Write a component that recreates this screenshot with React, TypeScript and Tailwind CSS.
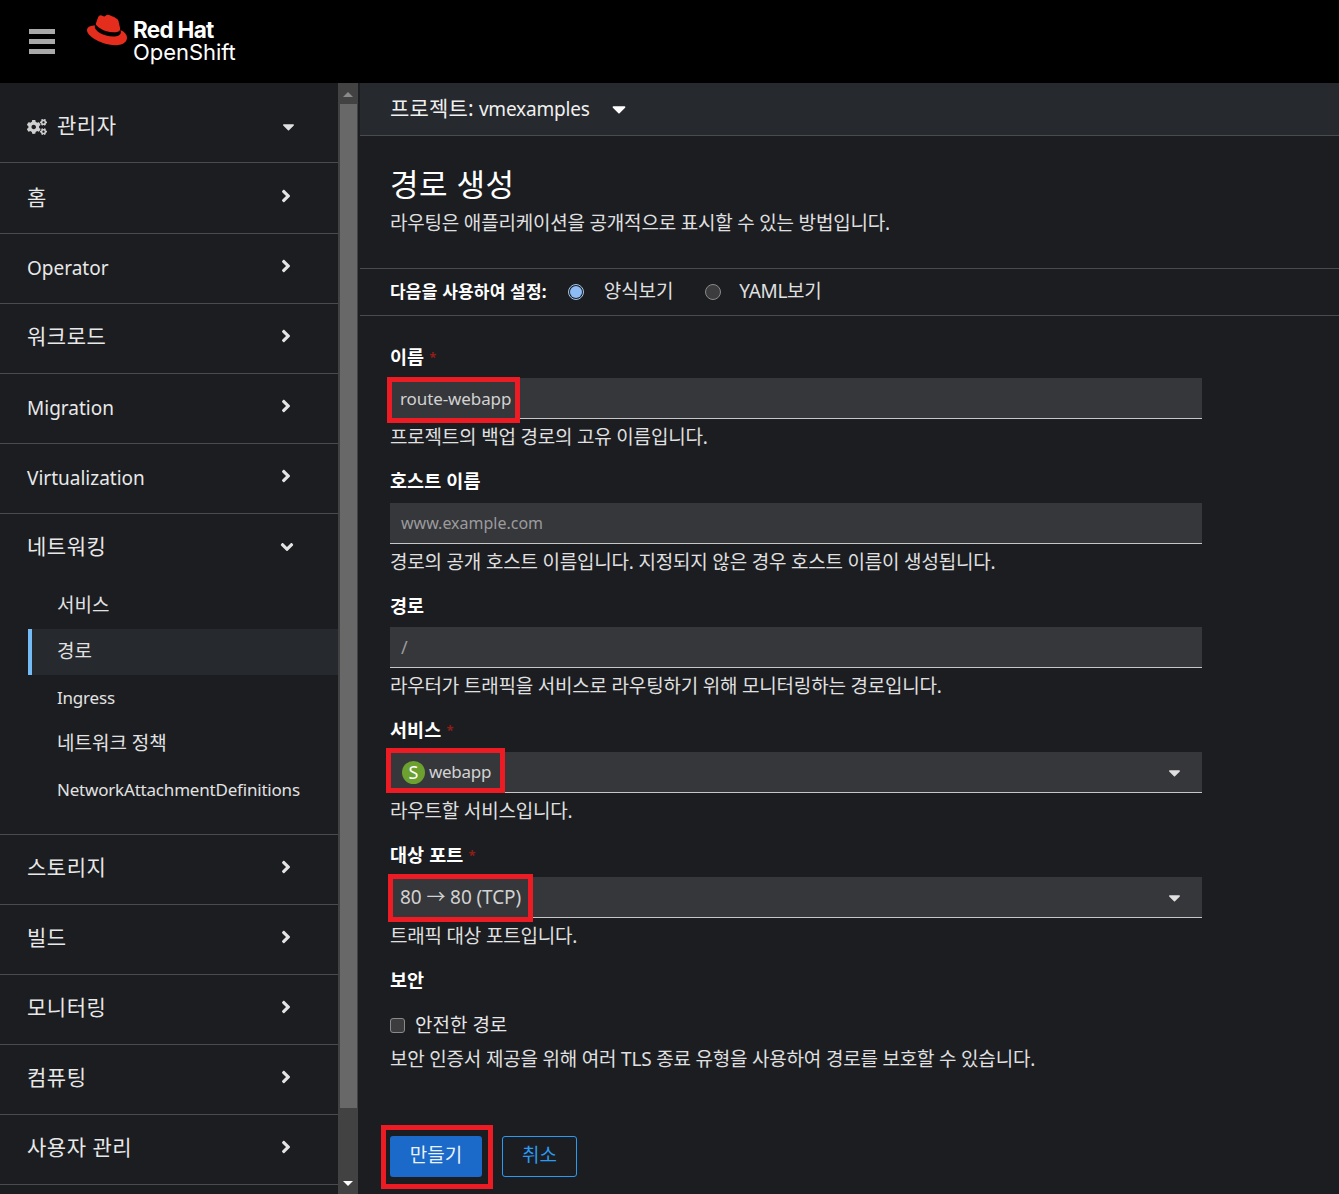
import React from "react";
import { FaCogs, FaAngleRight, FaAngleDown, FaCaretDown } from "react-icons/fa";

const font = "font-['Noto_Sans','Noto_Sans_CJK_KR',sans-serif]";
const ko = "text-[21px] tracking-[0.5px]";
const en = "text-[19px]";

function NavRow({ label, h, latin, flat }: { label: string; h: string; latin?: boolean; flat?: boolean }) {
  return (
    <div className={`flex items-center justify-between border-b border-[#4a4b4d] pl-[27px] pr-[42px] text-[#e8e8e8] ${h} ${latin ? en : ko}`}>
      <span className={latin || flat ? "" : "mb-[4px]"}>{label}</span>
      <FaAngleRight className="mt-[-5px] text-[20px] text-[#e4e4e4]" />
    </div>
  );
}

function Sub({ label, h, active, latin, up }: { label: string; h: string; active?: boolean; latin?: boolean; up?: boolean }) {
  return (
    <div className={`ml-[28px] flex items-center text-[#e2e2e2] ${h} ${up ? "pb-[2px]" : ""} ${latin ? "text-[17px] tracking-[-0.2px]" : "text-[19px]"} ${active ? "border-l-4 border-[#73bcf7] bg-[#26292d] pl-[25px]" : "pl-[29px]"}`}>
      {label}
    </div>
  );
}

function Field({
  label,
  req,
  mt,
  help,
  children,
  labelMb,
}: {
  label: string;
  req?: boolean;
  mt: string;
  help: string;
  children: React.ReactNode;
  labelMb: string;
}) {
  return (
    <div className={`w-[812px] ${mt}`}>
      <div className={`flex h-6 items-center text-[18.5px] font-bold leading-6 tracking-[0.1px] text-white ${labelMb}`}>
        {label}
        {req && <span className="ml-[5px] text-[13px] font-bold text-[#8f1d18]">*</span>}
      </div>
      {children}
      <div className="mt-[6px] h-6 text-[19px] leading-6 tracking-[-0.2px] text-[#e0e0e0]">{help}</div>
    </div>
  );
}

function Box({ children, select, overlay }: { children?: React.ReactNode; select?: boolean; overlay?: string }) {
  return (
    <div className="relative flex h-[41px] items-center justify-between border-b border-[#c7c7c7] bg-[#36373b] pl-[11px] pr-[18px] text-[17px] tracking-[-0.1px] text-[#d2d2d2]">
      <div className="flex items-center">{children}</div>
      {select && <FaCaretDown className="text-[19px] text-[#e0e0e0]" />}
      {overlay && <div className={`absolute border-[5px] border-[#ed1c24] ${overlay}`} />}
    </div>
  );
}

export default function App() {
  return (
    <div className={`flex h-[1194px] w-[1339px] flex-col overflow-hidden bg-[#1b1d21] ${font}`}>
      <header className="flex h-[83px] shrink-0 items-center bg-black">
        <div className="ml-[29px] flex w-[26px] flex-col gap-[5px]">
          <div className="h-[5px] bg-[#a9a9a9]" />
          <div className="h-[5px] bg-[#a9a9a9]" />
          <div className="h-[5px] bg-[#a9a9a9]" />
        </div>
        <svg className="mb-[24px] ml-[32px]" width="40" height="40" viewBox="0 0 24 24">
          <path
            fill="#e52d1d"
            d="M16.009 13.386c1.577 0 3.86-.326 3.86-2.202a1.765 1.765 0 0 0-.04-.431l-.94-4.08c-.216-.898-.406-1.305-1.982-2.093-1.223-.625-3.888-1.658-4.676-1.658-.733 0-.947.946-1.822.946-.842 0-1.467-.706-2.255-.706-.757 0-1.25.515-1.63 1.576 0 0-1.06 2.99-1.197 3.424a.81.81 0 0 0-.028.245c0 1.162 4.577 4.974 10.71 4.974m4.101-1.435c.218 1.032.218 1.14.218 1.277 0 1.765-1.984 2.745-4.593 2.745-5.895.004-11.06-3.451-11.06-5.734a2.326 2.326 0 0 1 .19-.925C2.746 9.415 0 9.794 0 12.217c0 3.969 9.405 8.861 16.851 8.861 5.71 0 7.149-2.582 7.149-4.62 0-1.605-1.387-3.425-3.887-4.512"
          />
        </svg>
        <div className="ml-[6px] mt-[-2px] flex flex-col font-['Inter',sans-serif] text-white">
          <span className="text-[22.5px] font-bold leading-[23px] tracking-[-0.7px]">Red Hat</span>
          <span className="text-[22px] font-normal leading-[23px] tracking-[-0.05px]">OpenShift</span>
        </div>
      </header>

      <div className="flex min-h-0 flex-1">
        <nav className="w-[338px] shrink-0">
          <div className={`flex h-[80px] items-center justify-between border-b border-[#4a4b4d] pl-[27px] pr-[40px] pt-[7px] text-[#e8e8e8] ${ko}`}>
            <span className="flex items-center">
              <FaCogs className="mr-[10px] mt-[2px] text-[20px] text-[#cfcfcf]" />
              관리자
            </span>
            <FaCaretDown className="text-[19px] text-[#e0e0e0]" />
          </div>
          <NavRow label="홈" h="h-[71px]" flat />
          <NavRow label="Operator" h="h-[70px]" latin />
          <NavRow label="워크로드" h="h-[70px]" />
          <NavRow label="Migration" h="h-[70px]" latin />
          <NavRow label="Virtualization" h="h-[70px]" latin />
          <div className="border-b border-[#4a4b4d]">
            <div className={`flex h-[67px] items-center justify-between pl-[27px] pr-[42px] text-[#e8e8e8] ${ko}`}>
              <span className="mb-[2px]">네트워킹</span>
              <FaAngleDown className="mr-[-1px] mt-[-1px] text-[20px] text-[#e4e4e4]" />
            </div>
            <div className="pb-[21px]">
              <Sub label="서비스" h="h-[48px]" />
              <Sub label="경로" h="h-[46px]" active up />
              <Sub label="Ingress" h="h-[46px]" latin />
              <Sub label="네트워크 정책" h="h-[46px]" up />
              <Sub label="NetworkAttachmentDefinitions" h="h-[46px]" latin />
            </div>
          </div>
          <NavRow label="스토리지" h="h-[70px]" />
          <NavRow label="빌드" h="h-[70px]" />
          <NavRow label="모니터링" h="h-[70px]" />
          <NavRow label="컴퓨팅" h="h-[70px]" />
          <NavRow label="사용자 관리" h="h-[70px]" />
        </nav>

        <div className="flex w-[20px] shrink-0 flex-col items-center bg-[#424242]">
          <div className="mt-[9px] h-0 w-0 border-x-[5px] border-b-[5px] border-x-transparent border-b-[#8a8a8a]" />
          <div className="mt-[7px] h-[1004px] w-[17px] bg-[#686868]" />
          <div className="mt-[73px] h-0 w-0 border-x-[5px] border-t-[5px] border-x-transparent border-t-white" />
        </div>

        <main className="ml-[2px] min-w-0 flex-1 text-[#e0e0e0]">
          <div className="flex h-[53px] items-center border-b border-[#4a4b4d] bg-[#26292d] pl-[30px] text-[#f0f0f0]">
            <span className="text-[21px] tracking-[0.2px]">프로젝트:</span>
            <span className="ml-[5px] text-[19px] tracking-[-0.2px]">vmexamples</span>
            <FaCaretDown className="ml-[18px] text-[22px] text-white" />
          </div>

          <div className="h-[133px] border-b border-[#4a4b4d] pl-[30px] pt-[26px]">
            <h1 className="text-[31px] leading-[44px] tracking-[0.5px] text-white">경로 생성</h1>
            <p className="mt-[5px] text-[19px] leading-6 tracking-[-0.2px] text-[#e0e0e0]">
              라우팅은 애플리케이션을 공개적으로 표시할 수 있는 방법입니다.
            </p>
          </div>

          <div className="flex h-[47px] items-center border-b border-[#4a4b4d] pl-[30px]">
            <span className="text-[17px] font-bold tracking-[0.2px] text-white">다음을 사용하여 설정:</span>
            <span className="ml-[21px] flex h-4 w-4 items-center justify-center rounded-full border border-[#a5c8ec] bg-[#1b1d21]">
              <span className="h-3 w-3 rounded-full bg-[#8ebdf6]" />
            </span>
            <span className="ml-[20px] mt-[-2px] text-[19px] tracking-[-0.1px]">양식보기</span>
            <span className="ml-[32px] h-4 w-4 rounded-full border border-[#8a8a8a] bg-[#3c3c3f]" />
            <span className="ml-[18px] mt-[-2px] text-[19px] tracking-[-0.3px]">YAML보기</span>
          </div>

          <div className="pl-[30px]">
            <Field label="이름" req mt="mt-[29px]" labelMb="mb-[9px]" help="프로젝트의 백업 경로의 고유 이름입니다.">
              <Box overlay="left-[-3px] top-[-1px] h-[46px] w-[133px]"><span className="ml-[-1px] mt-[2px]">route-webapp</span></Box>
            </Field>
            <Field label="호스트 이름" mt="mt-[20px]" labelMb="mb-[10px]" help="경로의 공개 호스트 이름입니다. 지정되지 않은 경우 호스트 이름이 생성됩니다.">
              <Box><span className="text-[16px] tracking-normal text-[#9b9b9d]">www.example.com</span></Box>
            </Field>
            <Field label="경로" mt="mt-[20px]" labelMb="mb-[9px]" help="라우터가 트래픽을 서비스로 라우팅하기 위해 모니터링하는 경로입니다.">
              <Box><span className="text-[18px] text-[#9b9b9d]">/</span></Box>
            </Field>
            <Field label="서비스" req mt="mt-[20px]" labelMb="mb-[10px]" help="라우트할 서비스입니다.">
              <Box select overlay="left-[-4px] top-[-4px] h-[45px] w-[119px]">
                <span className="ml-[1px] mr-[4px] flex h-[23px] w-[23px] items-center justify-center rounded-full bg-[#6ca02f] text-[18px] text-white">S</span>
                <span className="tracking-[-0.3px]">webapp</span>
              </Box>
            </Field>
            <Field label="대상 포트" req mt="mt-[20px]" labelMb="mb-[10px]" help="트래픽 대상 포트입니다.">
              <Box select overlay="left-[-2px] top-[-3px] h-[48px] w-[145px]"><span className="ml-[-1px] text-[19px]">80 → 80 (TCP)</span></Box>
            </Field>
            <div className="mt-[20px] h-6 text-[18.5px] font-bold leading-6 tracking-[0.1px] text-white">보안</div>
            <label className="mt-[21px] flex h-6 items-center text-[19px] text-[#e6e6e6]">
              <span className="h-[15px] w-[15px] rounded-[3px] border border-[#8a8a8a] bg-[#3c3c3f]" />
              <span className="ml-[10px]">안전한 경로</span>
            </label>
            <p className="mt-[10px] text-[19px] leading-6 tracking-[-0.2px]">
              보안 인증서 제공을 위해 여러 TLS 종료 유형을 사용하여 경로를 보호할 수 있습니다.
            </p>
            <div className="mt-[65px] flex items-start">
              <div className="relative">
                <button className="flex h-[41px] w-[92px] items-center justify-center rounded-[3px] bg-[#1b6ac9] pb-[2px] text-[19px] text-[#eaf2fb]">만들기</button>
                <div className="absolute left-[-9px] top-[-11px] h-[64px] w-[112px] border-[5px] border-[#ed1c24]" />
              </div>
              <button className="ml-[20px] flex h-[41px] w-[75px] items-center justify-center rounded-[3px] border border-[#2b9af3] pb-[2px] text-[19px] text-[#2b9af3]">취소</button>
            </div>
          </div>
        </main>
      </div>
    </div>
  );
}
